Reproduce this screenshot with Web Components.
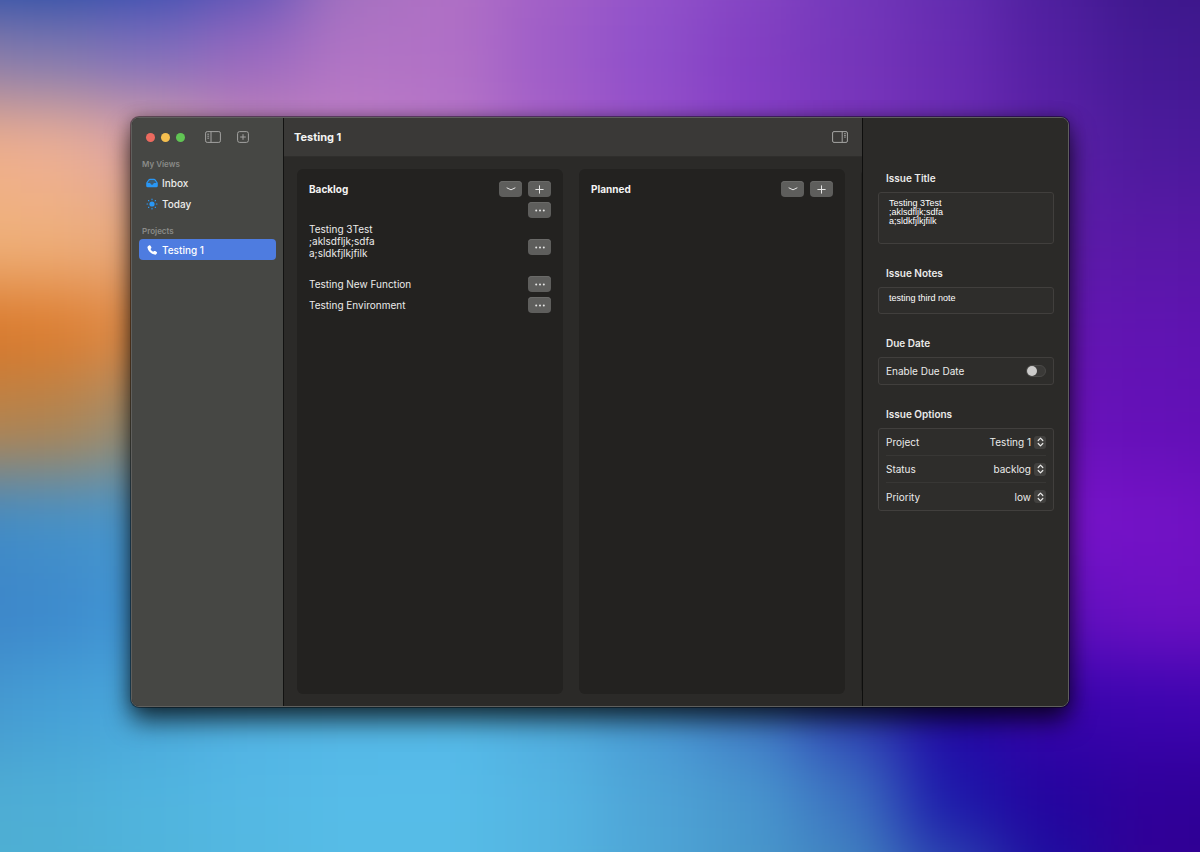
<!DOCTYPE html>
<html lang="en">
<head>
<meta charset="utf-8">
<title>Testing 1</title>
<style>
  body { margin: 0; font-family: Inter, sans-serif; font-size: 10px; line-height: 12px; color: #ebebea; }
</style>
</head>
<body>
<issue-desktop></issue-desktop>

<script>
const define = (name, html, setup) => {
  const template = document.createElement('template');
  template.innerHTML = html;
  customElements.define(name, class extends HTMLElement {
    constructor() {
      super();
      this.attachShadow({ mode: 'open' }).append(template.content.cloneNode(true));
    }
    connectedCallback() { if (setup) setup(this, this.shadowRoot); }
  });
};

/* Soft colour mesh behind the window: one blurred cell per colour. */
const mesh = [
  '1c48a8 1c46a6 2c48ae 5050b4 a070be b070c4 a361c6 9454ca 8648c4 7338ba 622eb0 4c1f9c 3c178a 3a1688',
  '8a7ca8 8078b0 806ebc 9868c0 b074c4 b070c6 9e5cc8 8f4fca 823fc3 7636ba 682bb2 531fa2 431994 3f178e',
  'f0ae88 eeb094 dca4a8 c486b8 bf7ec6 b876c8 a660c8 974fca 873fc6 7a35bc 6c2cb4 5a20a6 4c1a9c 48189a',
  'f0b27a efb07c e6a880 c585b6 bf7ec6 b876c8 a660c8 974fca 873fc6 7a35bc 6c2cb4 5c1ca8 5818a6 5616a4',
  'd87628 dc7c2e e08c48 c08068 b07080 a06090 9058a0 8048b0 8040b8 7430b8 6a20b0 6416b2 6014b2 5c12b0',
  'b8844c b08450 989078 889088 80809a 7070a0 6868a8 6860b0 6040b0 6420b0 6a18b4 6a12ba 6410b8 6010b4',
  '3f88c4 4490c8 4896cc 4c9ccc 4c9ccc 4c9ccc 4c90cc 4880c8 4070c0 4050b8 5020b4 7814ca 7412c6 6c10c0',
  '3d84c8 3d89cc 4298d6 4aa4dc 52b0e2 52b2e2 50aae0 4898d4 4080c8 3048b4 3810b0 6010c0 6c10c2 6c10c0',
  '4495cc 459fd6 4aa8dc 52b2e4 54b6e6 55b8e8 50acde 4898d4 4078c4 2c3cb0 2408a4 3804ac 3c04b0 4004b0',
  '4eacd2 4eaed6 50b4de 54b8e4 56bce8 56bce8 54b4e2 4ea4d6 4896ce 3c72c0 1c18aa 24049e 30009a 2e0096',
  '4eb0d0 4eb0d4 50b4da 54b8e0 56bce6 56bce6 54b4e0 4ea6d6 4898ca 4288c0 3050b0 1c10a0 320094 2e0090'
];
define('mesh-wallpaper', `
  <style>
    :host { display: block; overflow: hidden; background: #5d60b8; }
    .mesh { display: grid; grid-template-columns: repeat(14, 1fr); grid-auto-rows: 1fr;
            height: calc(100% + 172px); margin: -86px -100px; filter: blur(34px); }
  </style>
  <div class="mesh"></div>`,
  (host, root) => {
    const grid = root.querySelector('.mesh');
    grid.replaceChildren(...mesh.join(' ').split(' ').map(c => {
      const cell = document.createElement('div');
      cell.style.background = '#' + c;
      return cell;
    }));
  });

const icons = {
  sidebar: [16, 12, '<rect x=".6" y=".6" width="14.8" height="10.8" rx="1.6"/><path d="M6 .6v10.8M2.3 3.2h1.8M2.3 5.2h1.8M2.3 7.2h1.8"/>'],
  inspector: [16, 12, '<rect x=".6" y=".6" width="14.8" height="10.8" rx="1.4"/><path d="M10.2 .6v10.8"/><path d="M12 2.7h1.9M12 4.4h1.9M12 6.1h1.9" stroke-width=".9"/>'],
  addBox: [12, 12, '<rect x=".6" y=".6" width="10.8" height="10.8" rx="2"/><path d="M6 3.2v5.6M3.2 6h5.6"/>'],
  inbox: [12, 10, '<path fill="currentColor" stroke="none" d="M.2 5.2Q.3 4.600.7 4L2.300 1.700Q2.900.8 4 .8h4q1.100 0 1.700.9L11.300 4q.4.600.5 1.200v2.600q0 1.500-1.500 1.500H1.700Q.2 9.300.2 7.800z"/><path d="M1.500 4.900h2.400q.5 0 .6.500Q4.800 6.700 6 6.700t1.500-1.300q.1-.5.600-.5h2.400L8.900 2.500Q8.500 1.900 7.800 1.900H4.200q-.7 0-1.100.6z" fill="#464744" fill-opacity=".75" stroke="none"/>'],
  sun: [12, 12, '<circle cx="6" cy="6" r="2.600" fill="currentColor" stroke="none"/><path stroke-linecap="round" stroke-width="1.100" d="M6 1v.7M6 10.300v.7M1 6h.7M10.300 6h.7M2.500 2.500l.4.4M9.100 9.100l.4.4M2.500 9.500l.4-.4M9.100 2.900l.4-.4"/>'],
  phone: [12, 12, '<path fill="currentColor" stroke="none" d="M2.600 1.700 3.300 1.300q.6-.3 1 .3L5.300 3q.4.600-.1 1.200l-.5.6q-.2.3 0 .6.800 1.300 2.100 2.200.3.200.6 0l.7-.5q.6-.4 1.200 0l1.400 1q.6.4.3 1l-.4.700q-.6 1-2 .8Q5.900 10.200 3.800 8 1.700 5.800 1.400 3.600 1.400 2.300 2.600 1.700z"/>'],
  chevron: [10, 4, '<path stroke-linecap="round" stroke-linejoin="round" d="M1 .9Q3.200 2 5 2.800 6.800 2 9 .9"/>'],
  plus: [9, 9, '<path stroke-linecap="round" d="M4.500.8v7.400M.8 4.500h7.400"/>'],
  more: [12, 3, '<g fill="currentColor" stroke="none"><circle cx="2.200" cy="1.500" r="1"/><circle cx="6" cy="1.500" r="1"/><circle cx="9.800" cy="1.500" r="1"/></g>'],
  updown: [7, 10, '<path stroke-width="1.200" stroke-linecap="round" stroke-linejoin="round" d="M1.200 3.500 3.500 1.200 5.800 3.500M1.200 6.500 3.500 8.800 5.800 6.500"/>']
};
define('line-icon', `
  <style>:host { display: inline-flex; } svg { display: block; fill: none; stroke: currentColor; }</style>`,
  (host, root) => {
    const [w, h, body] = icons[host.getAttribute('name')];
    root.querySelector('svg')?.remove();
    root.innerHTML += `<svg width="${w}" height="${h}" viewBox="0 0 ${w} ${h}" aria-hidden="true">${body}</svg>`;
  });

define('pill-button', `
  <style>
    :host { display: inline-flex; flex: none; }
    button { display: flex; align-items: center; justify-content: center; width: 23px; height: 16px; padding: 0;
             border: 0; border-radius: 4px; color: #e6e6e5; background: #5e5e5c; box-shadow: inset 0 1px #6a6a68; }
  </style>
  <button type="button"><slot></slot></button>`,
  (host, root) => root.querySelector('button').setAttribute('aria-label', host.getAttribute('label')));

define('nav-item', `
  <style>
    :host { display: block; }
    a { display: flex; align-items: center; gap: 4px; height: 21px; padding: 0 7px; border-radius: 4px;
        color: #ececeb; text-decoration: none; font-weight: 500; }
    line-icon { width: 12px; color: #2997f5; }
    :host([selected]) a { background: #4e7ce0; color: #fff; }
    :host([selected]) line-icon { color: #fff; }
  </style>
  <a href="#"><slot></slot></a>`,
  (host, root) => {
    const icon = document.createElement('line-icon');
    icon.setAttribute('name', host.getAttribute('icon'));
    root.querySelector('a').prepend(icon);
  });

define('app-sidebar', `
  <style>
    :host { display: flex; flex-direction: column; flex: none; width: 152px; box-sizing: border-box; padding: 0 7px;
            background: #464744; border-right: 1px solid #121211; }
    .tools { display: flex; align-items: center; height: 38px; padding-left: 7px; color: #a3a3a1; }
    .light { width: 9px; height: 9px; border-radius: 50%; margin-right: 6px; }
    .red { background: #ec6a5f; } .amber { background: #f5bf4f; } .green { background: #61c554; }
    button { display: flex; padding: 0; border: 0; background: none; color: inherit; }
    .toggle { margin: 0 16px 0 14px; }
    h2 { margin: 0; padding: 0 3px; font-size: 8px; line-height: 16px; font-weight: 600; color: #8a8b88; }
    nav { display: flex; flex-direction: column; margin-bottom: 9px; }
  </style>
  <div class="tools">
    <span class="light red"></span><span class="light amber"></span><span class="light green"></span>
    <button class="toggle" type="button" aria-label="Toggle sidebar"><line-icon name="sidebar"></line-icon></button>
    <button type="button" aria-label="New project"><line-icon name="addBox"></line-icon></button>
  </div>
  <h2>My Views</h2>
  <nav><nav-item icon="inbox">Inbox</nav-item><nav-item icon="sun">Today</nav-item></nav>
  <h2>Projects</h2>
  <nav><nav-item icon="phone" selected>Testing 1</nav-item></nav>`);

define('issue-row', `
  <style>
    :host { display: flex; align-items: center; justify-content: space-between; min-height: 16px; white-space: pre-line; }
  </style>
  <span><slot></slot></span><pill-button label="Issue actions"><line-icon name="more"></line-icon></pill-button>`);

define('board-column', `
  <style>
    :host { display: flex; flex-direction: column; gap: 5px; flex: 0 0 266px; box-sizing: border-box; padding: 12px;
            border-radius: 6px; background: #232220; }
    header { display: flex; align-items: center; gap: 6px; height: 16px; }
    h2 { flex: 1; margin: 0; font-size: 10px; line-height: 16px; font-weight: 700; color: #f4f4f3; }
  </style>
  <header>
    <h2></h2>
    <pill-button label="Collapse"><line-icon name="chevron"></line-icon></pill-button>
    <pill-button label="Add issue"><line-icon name="plus"></line-icon></pill-button>
  </header>
  <slot></slot>`,
  (host, root) => root.querySelector('h2').textContent = host.getAttribute('heading'));

define('project-board', `
  <style>
    :host { display: flex; flex-direction: column; flex: 1; min-width: 0; background: #2b2a28; }
    header { display: flex; align-items: center; justify-content: space-between; height: 38px; padding: 0 14px 0 10px;
             background: #3a3937; border-bottom: 1px solid #2f2e2c; }
    h1 { margin: 0; font-size: 11px; line-height: 16px; font-weight: 700; color: #f4f4f3; }
    button { display: flex; padding: 0; border: 0; background: none; color: #a5a5a3; }
    .columns { display: flex; flex: 1; gap: 16px; padding: 12px 0 12px 13px; overflow: hidden; }
  </style>
  <header>
    <h1>Testing 1</h1>
    <button type="button" aria-label="Toggle inspector"><line-icon name="inspector"></line-icon></button>
  </header>
  <div class="columns">
    <board-column heading="Backlog">
      <issue-row></issue-row>
      <issue-row>Testing 3Test
;aklsdfljk;sdfa
a;sldkfjlkjfilk
&nbsp;</issue-row>
      <issue-row>Testing New Function</issue-row>
      <issue-row>Testing Environment</issue-row>
    </board-column>
    <board-column heading="Planned"></board-column>
    <board-column heading=""></board-column>
  </div>`);

define('option-row', `
  <style>
    :host { display: flex; align-items: center; justify-content: space-between; height: 27px; box-sizing: border-box; }
    .pick { display: grid; grid-template-columns: 1fr 12px; align-items: center; }
    select { grid-area: 1 / 1 / 2 / 3; appearance: none; padding: 0 15px 0 0; margin: 0; border: 0; background: none;
             color: inherit; font: inherit; text-align-last: right; }
    .knob { grid-area: 1 / 2; display: flex; align-items: center; justify-content: center; height: 13px;
            border-radius: 3px; background: #42413f; pointer-events: none; }
  </style>
  <label for="pick"></label>
  <span class="pick"><select id="pick"></select><span class="knob"><line-icon name="updown"></line-icon></span></span>`,
  (host, root) => {
    root.querySelector('label').textContent = host.getAttribute('label');
    root.querySelector('select').replaceChildren(new Option(host.getAttribute('value')));
  });

define('issue-inspector', `
  <style>
    :host { display: flex; flex-direction: column; gap: 21px; flex: none; width: 206px; box-sizing: border-box;
            padding: 52px 14px 52px 15px; background: #2b2a28; border-left: 1px solid #0e0e0d; }
    section { display: flex; flex-direction: column; gap: 6px; }
    h2, .title { margin: 0; padding: 0 8px; font-size: 10px; line-height: 16px; font-weight: 600; }
    textarea, .box { box-sizing: border-box; border: 1px solid #413f3d; border-radius: 3px; background: #2e2d2b; }
    textarea { display: block; width: 100%; margin: 0; padding: 6px 10px; resize: none; overflow: hidden; outline: 0;
               font: 9px/9px "Liberation Sans", sans-serif; color: #fff; }
    .issue { height: 52px; }
    .notes { height: 27px; }
    .box { padding: 0 7px; }
    .due { display: flex; align-items: center; justify-content: space-between; height: 28px; }
    .due input { appearance: none; display: flex; align-items: center; width: 20px; height: 12px; margin: 0;
                 border: 1px solid #4a4947; border-radius: 6px; background: #3b3a38; box-sizing: border-box; }
    .due input::before { content: ""; width: 10px; height: 10px; border-radius: 50%; background: #cccbca; }
    .due input:checked { justify-content: flex-end; background: #4e7ce0; }
    option-row:not(:last-child) { border-bottom: 1px solid #383735; }
  </style>
  <section>
    <label class="title" for="title">Issue Title</label>
    <textarea class="issue" id="title" spellcheck="false">Testing 3Test
;aklsdfljk;sdfa
a;sldkfjlkjfilk
</textarea>
  </section>
  <section>
    <label class="title" for="notes">Issue Notes</label>
    <textarea class="notes" id="notes" spellcheck="false">testing third note</textarea>
  </section>
  <section>
    <h2>Due Date</h2>
    <div class="box due"><label for="due">Enable Due Date</label><input id="due" type="checkbox" role="switch"></div>
  </section>
  <section>
    <h2>Issue Options</h2>
    <div class="box">
      <option-row label="Project" value="Testing 1"></option-row>
      <option-row label="Status" value="backlog"></option-row>
      <option-row label="Priority" value="low"></option-row>
    </div>
  </section>`);

define('app-window', `
  <style>
    :host { display: flex; flex: 1; box-sizing: border-box; overflow: hidden; border: 1px solid #5f5f5d;
            border-radius: 8px; background: #2b2a28;
            box-shadow: 0 0 0 1px rgba(0,0,0,.4), 0 14px 26px rgba(0,0,0,.7), 0 0 16px rgba(0,0,0,.3); }
  </style>
  <app-sidebar></app-sidebar><project-board></project-board><issue-inspector></issue-inspector>`);

define('issue-desktop', `
  <style>
    :host { display: grid; min-height: 100vh; }
    mesh-wallpaper, .stage { grid-area: 1 / 1; min-width: 0; }
    mesh-wallpaper { height: 100%; }
    .stage { position: relative; display: flex; padding: 117px 131px 145px; }
  </style>
  <mesh-wallpaper></mesh-wallpaper>
  <div class="stage"><app-window></app-window></div>`);
</script>
</body>
</html>
